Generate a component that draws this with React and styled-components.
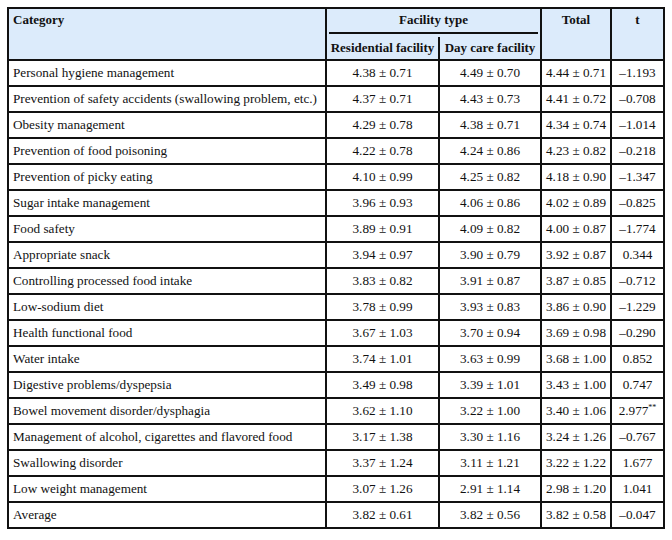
import React from 'react'
import styled, { createGlobalStyle } from 'styled-components'

const Global = createGlobalStyle`
  html, body { margin: 0; padding: 0; background: #fff; }
  body { font-family: "Liberation Serif", "Times New Roman", serif; color: #111; }
`

const Page = styled.div`
  padding: 7px;
`

const Table = styled.table`
  border-collapse: collapse;
  table-layout: fixed;
  width: 656px;
  border: 2px solid #111;
  font-size: 13.2px;
`

const Head = styled.th`
  background: #dcebfb;
  border: 2px solid #111;
  font-weight: bold;
  font-size: 13px;
  padding: 0 4px;
  text-align: ${p => (p.$left ? 'left' : 'center')};
  vertical-align: top;
  padding-top: 3px;
  height: ${p => p.$h || 22}px;
  box-sizing: border-box;
  border-bottom: ${p => (p.$open ? 'hidden' : '2px solid #111')};
  white-space: nowrap;
`

const SubHead = styled(Head)`
  border-top: hidden;
  vertical-align: middle;
  padding: 0 2px;
`

const Rule = styled.div`
  border-bottom: 2px solid #111;
  margin: 4px -2px 0;
`

const Cell = styled.td`
  border: 2px solid #111;
  height: 24px;
  padding: 0 ${p => (p.$left ? 4 : 1)}px;
  text-align: ${p => (p.$left ? 'left' : 'center')};
  vertical-align: middle;
  white-space: nowrap;
`

const Sup = styled.sup`
  font-size: 8px;
  line-height: 0;
`

const rows = [
  ['Personal hygiene management', '4.38 ± 0.71', '4.49 ± 0.70', '4.44 ± 0.71', '–1.193'],
  ['Prevention of safety accidents (swallowing problem, etc.)', '4.37 ± 0.71', '4.43 ± 0.73', '4.41 ± 0.72', '–0.708'],
  ['Obesity management', '4.29 ± 0.78', '4.38 ± 0.71', '4.34 ± 0.74', '–1.014'],
  ['Prevention of food poisoning', '4.22 ± 0.78', '4.24 ± 0.86', '4.23 ± 0.82', '–0.218'],
  ['Prevention of picky eating', '4.10 ± 0.99', '4.25 ± 0.82', '4.18 ± 0.90', '–1.347'],
  ['Sugar intake management', '3.96 ± 0.93', '4.06 ± 0.86', '4.02 ± 0.89', '–0.825'],
  ['Food safety', '3.89 ± 0.91', '4.09 ± 0.82', '4.00 ± 0.87', '–1.774'],
  ['Appropriate snack', '3.94 ± 0.97', '3.90 ± 0.79', '3.92 ± 0.87', '0.344'],
  ['Controlling processed food intake', '3.83 ± 0.82', '3.91 ± 0.87', '3.87 ± 0.85', '–0.712'],
  ['Low-sodium diet', '3.78 ± 0.99', '3.93 ± 0.83', '3.86 ± 0.90', '–1.229'],
  ['Health functional food', '3.67 ± 1.03', '3.70 ± 0.94', '3.69 ± 0.98', '–0.290'],
  ['Water intake', '3.74 ± 1.01', '3.63 ± 0.99', '3.68 ± 1.00', '0.852'],
  ['Digestive problems/dyspepsia', '3.49 ± 0.98', '3.39 ± 1.01', '3.43 ± 1.00', '0.747'],
  ['Bowel movement disorder/dysphagia', '3.62 ± 1.10', '3.22 ± 1.00', '3.40 ± 1.06', '2.977', '**'],
  ['Management of alcohol, cigarettes and flavored food', '3.17 ± 1.38', '3.30 ± 1.16', '3.24 ± 1.26', '–0.767'],
  ['Swallowing disorder', '3.37 ± 1.24', '3.11 ± 1.21', '3.22 ± 1.22', '1.677'],
  ['Low weight management', '3.07 ± 1.26', '2.91 ± 1.14', '2.98 ± 1.20', '1.041'],
  ['Average', '3.82 ± 0.61', '3.82 ± 0.56', '3.82 ± 0.58', '–0.047'],
]

export default function App() {
  return (
    <Page>
      <Global />
      <Table>
        <colgroup>
          <col style={{ width: 318 }} />
          <col style={{ width: 113 }} />
          <col style={{ width: 102 }} />
          <col style={{ width: 70 }} />
          <col style={{ width: 53 }} />
        </colgroup>
        <thead>
          <tr>
            <Head $left rowSpan={2}>Category</Head>
            <Head colSpan={2} $open $h={29}>
              Facility type
              <Rule />
            </Head>
            <Head rowSpan={2}>Total</Head>
            <Head rowSpan={2}>t</Head>
          </tr>
          <tr>
            <SubHead $h={23}>Residential facility</SubHead>
            <SubHead $h={23}>Day care facility</SubHead>
          </tr>
        </thead>
        <tbody>
          {rows.map((r, i) => (
            <tr key={i}>
              <Cell $left>{r[0]}</Cell>
              <Cell>{r[1]}</Cell>
              <Cell>{r[2]}</Cell>
              <Cell>{r[3]}</Cell>
              <Cell>
                {r[4]}
                {r[5] && <Sup>{r[5]}</Sup>}
              </Cell>
            </tr>
          ))}
        </tbody>
      </Table>
    </Page>
  )
}
